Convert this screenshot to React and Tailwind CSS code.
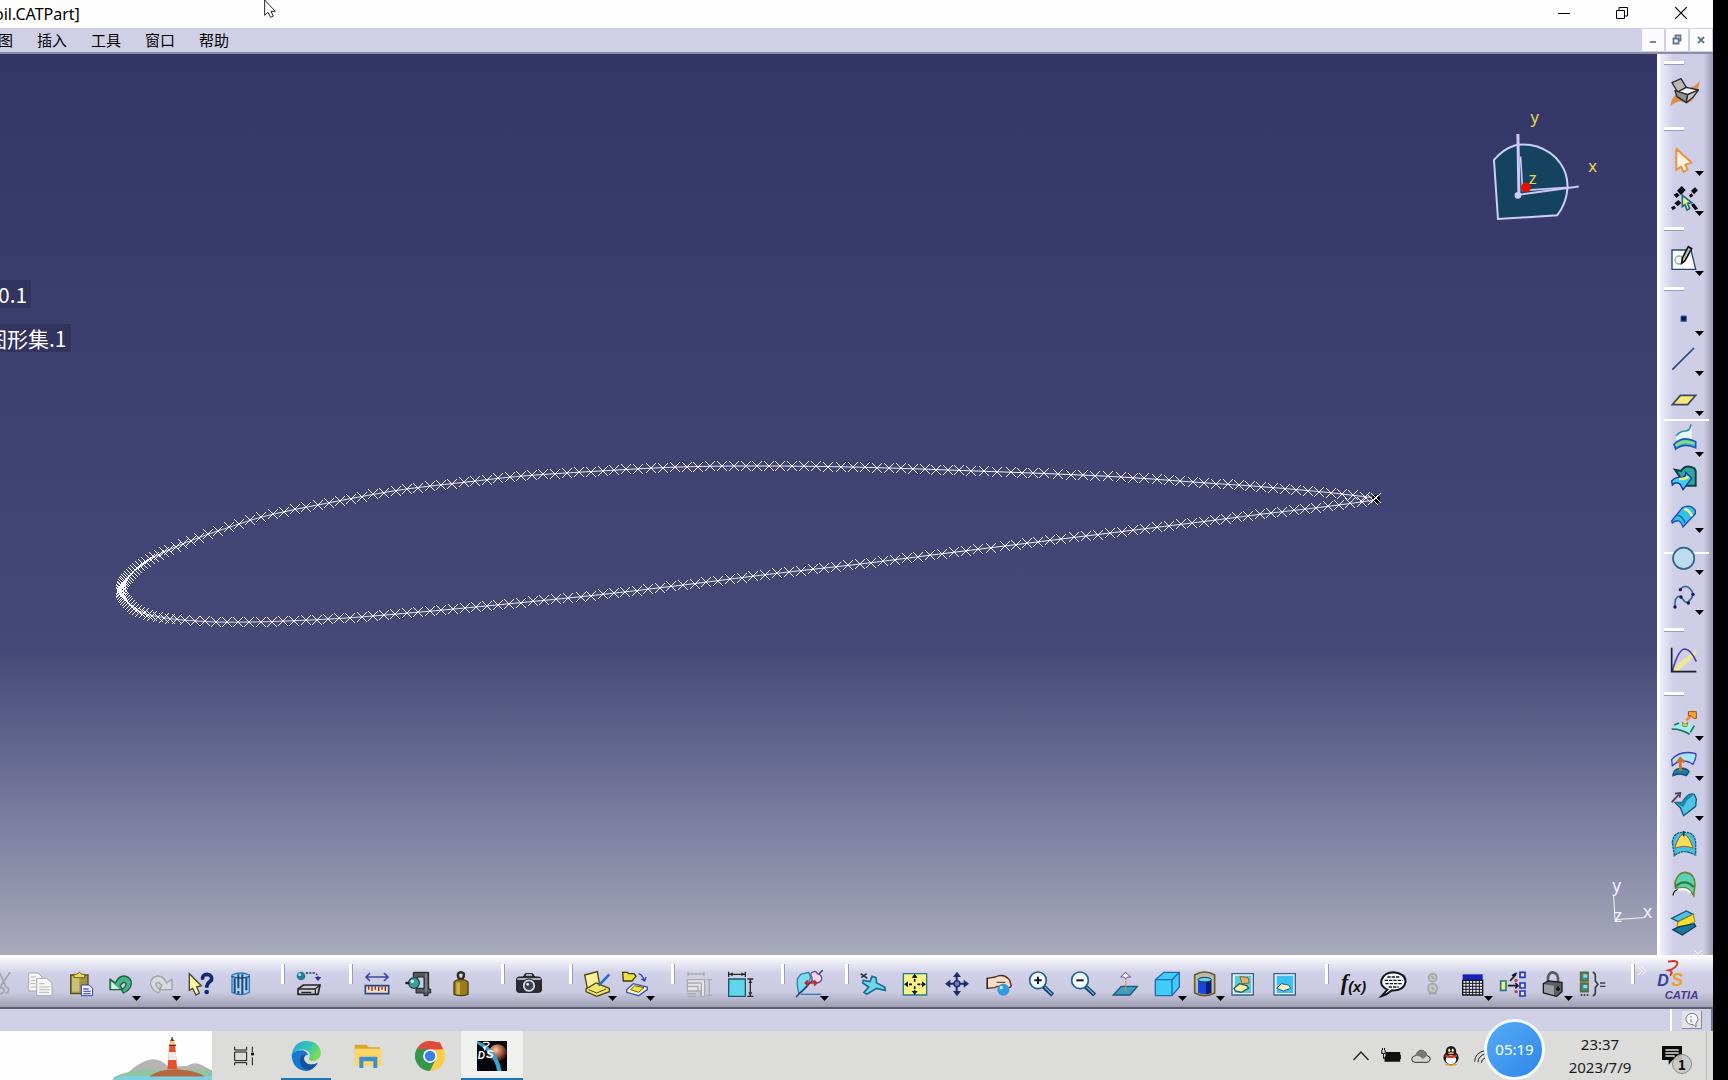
import { useState } from 'react';
import clsx from 'clsx';

const NAVY = '#1d2b6b';
const CYAN = '#4cc3e8';
const TEAL = '#1f7d9c';

// 图标统一画在 78x78 的坐标系里
const icons = {
  workbench: (
    <>
      <path d="M-2 86 Q0 62 14 50 L56 68 Q84 46 86 6 Q76 26 58 28 Q84 60 50 76 Q20 62 -2 86Z" fill="#dd8d4c" />
      <g stroke="#2a2a2a" strokeWidth="4" strokeLinejoin="round">
        <path d="M3 14 L30 2 L46 28 L20 42Z" fill="#b9b9b9" />
        <path d="M20 42 L46 28 L82 36 L50 50Z" fill="#f2f2f2" />
        <path d="M12 38 L50 50 L46 74 L18 56Z" fill="#8f8f8f" />
        <path d="M50 50 L82 36 L66 58 L46 74Z" fill="#c9c9c9" />
      </g>
    </>
  ),
  select: <path d="M16 8 V72 L30 62 L38 78 L50 70 L43 56 L62 50Z" fill="#fff2e4" stroke="#e6923f" strokeWidth="6" strokeLinejoin="round" />,
  trap: (
    <>
      <g fill="#0c0c14">
        <path d="M18 14 L32 0 L44 12 L30 28Z" />
        <path d="M8 26 l10 -6 8 8 -10 8Z M60 14 l12 -10 9 9 -12 12Z M54 28 l8 -6 5 7 -8 6Z" />
        <path d="M10 52 l12 -10 9 9 -11 10Z M0 64 l10 -5 5 7 -10 7Z M60 56 l9 -4 12 16 -9 5Z" />
      </g>
      <path d="M34 28 V62 L42 56 L48 72 L56 68 L50 52 L62 50Z" fill="#f3f08a" stroke="#1e6c80" strokeWidth="5" />
    </>
  ),
  sketch: (
    <>
      <path d="M3 12 H60 L74 70 H3Z" fill="#fbfdff" stroke="#27466d" strokeWidth="4" />
      <circle cx="24" cy="42" r="12" fill="none" stroke="#8ab98a" strokeWidth="4" />
      <path d="M52 2 L34 36 L32 52 L42 44 L62 8Z" fill="#b9c7a9" stroke="#14141c" strokeWidth="5" />
    </>
  ),
  point: <path d="M30 30 H46 V46 H30Z" fill="#0d1446" stroke="#2f6bb4" strokeWidth="3" />,
  line: <path d="M4 71 L69 6" stroke="#23477f" strokeWidth="5" />,
  plane: <path d="M4 56 L28 28 H74 L50 56Z" fill="#f7e679" stroke="#3b4a5f" strokeWidth="5" />,
  extrude: (
    <>
      <path d="M18 24 Q34 16 46 12 Q60 10 60 -4 V42 H18Z" fill="#dff6fb" stroke="#fff" strokeWidth="3" />
      <path d="M16 26 Q28 12 44 12 Q58 10 60 -8" fill="none" stroke="#2b8f9c" strokeWidth="5" />
      <path d="M9 52 Q36 24 74 44 V62 Q38 46 14 66Z" fill="#39bfe4" stroke="#2353b0" strokeWidth="5" />
      <path d="M14 56 Q38 36 70 50" fill="none" stroke="#8be06a" strokeWidth="7" />
    </>
  ),
  multi: (
    <>
      <path d="M12 14 L30 18 Q44 -4 70 10 L74 18 V62 H44Z" fill="#2fa6a0" stroke="#0f3f4c" strokeWidth="6" />
      <path d="M2 48 Q14 34 30 38 Q46 36 44 22 L62 40 L36 74 L28 58 Q14 48 4 60Z" fill="#3ccdf0" stroke="#17329a" strokeWidth="4" />
      <path d="M24 42 Q48 42 52 34" stroke="#e9f06a" strokeWidth="8" fill="none" />
    </>
  ),
  sweep: (
    <>
      <path d="M2 54 L34 14 Q58 2 73 22 V32 L36 72 Q26 42 4 60Z" fill="#35c0ea" stroke="#2149b0" strokeWidth="4" />
      <path d="M40 18 Q58 22 62 40" fill="none" stroke="#eef28a" strokeWidth="8" />
      <path d="M18 36 Q36 40 42 60" fill="none" stroke="#1c6ab2" strokeWidth="4" />
    </>
  ),
  circle: <circle cx="38" cy="40" r="32" fill="#bddcf0" stroke="#2a6585" strokeWidth="5" />,
  spline: (
    <>
      <path d="M28 12 Q44 -4 58 12 Q76 30 50 52 C34 54 38 34 24 34 Q10 36 12 66" fill="none" stroke="#3a6a9c" strokeWidth="5" />
      <g fill="#15155c"><circle cx="28" cy="14" r="5" /><circle cx="66" cy="28" r="5" /><circle cx="52" cy="54" r="5" /><circle cx="30" cy="36" r="5" /><circle cx="12" cy="66" r="5" /></g>
    </>
  ),
  law: (
    <>
      <path d="M2 70 L26 46 L76 8 V20 L20 74Z" fill="#efe79a" />
      <path d="M4 72 Q22 6 42 6 Q60 8 76 44" fill="none" stroke="#4a3aa6" strokeWidth="5" />
      <path d="M2 2 V74 H76" fill="none" stroke="#1d1d2c" strokeWidth="5" />
    </>
  ),
  offsetPoint: (
    <>
      <path d="M2 56 Q20 34 34 38 L74 46 L56 66 Q30 54 2 56Z" fill="#9deef0" />
      <path d="M2 54 Q30 54 56 70 M10 42 L24 36 M70 44 L58 64" stroke="#1d6f52" strokeWidth="5" fill="none" />
      <path d="M34 34 l8 6 8 -6 -2 12 -12 0Z" fill="#e8ee62" stroke="#7b8a2b" strokeWidth="3" />
      <path d="M46 28 L62 12" stroke="#f08a24" strokeWidth="8" fill="none" />
      <path d="M52 2 H76 V22 H68 L60 14 H52Z" fill="#f7a33a" stroke="#9c4f12" strokeWidth="3" />
    </>
  ),
  offset: (
    <>
      <path d="M2 26 Q28 -4 74 8 Q78 18 66 40 Q34 18 4 44Z" fill="#a6e6f6" stroke="#3c3fb4" strokeWidth="4" />
      <path d="M6 70 Q10 52 28 52 Q46 50 54 62 L46 74 Q24 64 6 74Z" fill={TEAL} stroke="#164a72" strokeWidth="4" />
      <path d="M28 60 V24 M18 34 L28 22 L40 34" fill="none" stroke="#d5702c" strokeWidth="8" />
    </>
  ),
  translate: (
    <>
      <path d="M12 34 L34 34 Q50 4 70 10 L76 24 L74 46 L38 74 L28 50Z" fill={CYAN} stroke="#165a74" strokeWidth="4" />
      <path d="M12 34 L34 34 Q50 4 70 10 L50 26 L36 48Z" fill="#1d86a8" />
      <path d="M2 34 L24 10 M12 8 L28 6 L26 20" stroke="#4f3a4c" strokeWidth="5" fill="none" />
    </>
  ),
  fill: (
    <>
      <path d="M4 34 Q8 2 38 4 Q70 2 74 34 V72 Q52 62 40 62 Q24 62 10 74Z" fill="#45bfe2" stroke="#1c5a7a" strokeWidth="4" strokeDasharray="8 2" />
      <path d="M12 52 Q20 16 38 8 Q56 16 66 52 Q40 40 12 52Z" fill="#f8dc5c" stroke="#a35b1c" strokeWidth="3" />
      <path d="M38 0 V16" stroke="#11364c" strokeWidth="5" />
    </>
  ),
  blend: (
    <>
      <path d="M12 34 Q22 2 44 4 Q72 8 72 40 L68 74 Q58 56 44 50 L14 52Z" fill="#59d2b8" stroke="#77812a" strokeWidth="5" />
      <path d="M12 48 Q40 20 68 48" fill="none" stroke="#2c7a3a" strokeWidth="6" />
      <path d="M6 74 Q10 54 24 56 Q46 50 58 66" fill="none" stroke="#f4f7f2" strokeWidth="7" />
      <path d="M6 74 Q8 58 20 56" fill="none" stroke="#1a1a22" strokeWidth="4" />
    </>
  ),
  join: (
    <>
      <path d="M2 22 L46 0 L66 10 L22 32Z" fill={CYAN} stroke="#1f5570" strokeWidth="4" />
      <path d="M22 32 L66 10 L72 32 L22 54 L18 44Z" fill="#f3e02c" stroke="#9c7a20" strokeWidth="3" />
      <path d="M6 56 L22 48 L70 38 L74 46 L34 72Z" fill="#187a9e" stroke="#123c58" strokeWidth="4" />
    </>
  ),
  cut: <path d="M34 4 L54 48 M66 4 L36 48 M38 50 a9 9 0 1 0 2 18 a9 9 0 1 0 -2 -18 M54 48 a9 9 0 1 1 -2 18" fill="none" stroke="#a4a4a8" strokeWidth="5" />,
  copy: (
    <g fill="#f7f7f7" stroke="#a9a9ac" strokeWidth="3">
      <path d="M2 6 H30 L42 18 V60 H2Z" />
      <path d="M26 22 H56 L72 36 V74 H26Z" />
      <path d="M34 38 H50 M34 48 H64 M34 56 H64 M34 64 H64 M8 18 H24 M8 28 H22 M8 38 H22 M8 48 H22" stroke="#b4b4b4" />
    </g>
  ),
  paste: (
    <>
      <path d="M8 12 H60 V68 H8Z" fill="#9d9448" stroke="#55511f" strokeWidth="4" />
      <path d="M12 16 H34 V62 H12Z" fill="#c9c274" />
      <path d="M18 20 V10 H26 L34 4 L42 10 H50 V20Z" fill="#f3d95a" stroke="#6f6420" strokeWidth="3" />
      <path d="M40 42 H64 L74 52 V74 H40Z" fill="#eef0ff" stroke="#3c3f9e" strokeWidth="3" />
      <path d="M46 54 H62 M46 61 H68 M46 68 H68" stroke="#5a5fc4" strokeWidth="4" />
    </>
  ),
  undo: (
    <>
      <path d="M22 36 Q32 14 50 15 Q72 20 70 40 Q66 58 46 66 L40 56 Q56 48 54 38 Q48 28 36 44 L44 56 H6 V24Z" fill="#48b487" stroke="#1e5f4a" strokeWidth="4" strokeLinejoin="round" />
      <path d="M10 32 L34 54 H10Z" fill="#dff4dc" />
    </>
  ),
  redo: <path d="M56 36 Q46 14 28 15 Q6 20 8 40 Q12 58 32 66 L38 56 Q22 48 24 38 Q30 28 42 44 L34 56 H72 V24Z" fill="#d9dae0" stroke="#a2a3aa" strokeWidth="4" strokeLinejoin="round" />,
  whatsThis: (
    <>
      <path d="M4 8 V58 L14 52 L24 72 L34 66 L26 48 L40 44Z" fill="#fbf6a4" stroke="#4a4632" strokeWidth="4" />
      <path d="M44 26 Q42 10 58 10 Q74 12 70 28 Q56 38 56 50" fill="none" stroke="#14286c" strokeWidth="11" />
      <circle cx="56" cy="63" r="7" fill="#14286c" />
    </>
  ),
  bin: (
    <>
      <path d="M12 12 Q38 0 64 12 V64 Q38 78 12 64Z" fill="#a9d6f0" stroke="#2f7ab4" strokeWidth="4" />
      <path d="M10 16 Q38 26 66 16" fill="none" stroke="#1f4f8c" strokeWidth="4" />
      <path d="M20 22 V66 M31 10 V52 M31 60 V70 M43 10 V70 M55 20 V58" stroke="#1f4480" strokeWidth="6" />
    </>
  ),
  material: (
    <>
      <circle cx="15" cy="15" r="13" fill="#237f96" />
      <circle cx="11" cy="11" r="4" fill="#bdf0f5" />
      <path d="M30 6 H54 Q66 8 66 22" fill="none" stroke="#222a6a" strokeWidth="4" strokeDasharray="6 4" />
      <path d="M56 18 H76 L66 30Z" fill="#2a2ab0" />
      <path d="M6 54 L22 42 H72 L66 70 H6Z" fill="#cfcfd4" stroke="#24242c" strokeWidth="5" />
      <path d="M8 54 H58 V70 M58 54 L72 42 M16 64 H46" stroke="#24242c" strokeWidth="4" fill="none" />
    </>
  ),
  measure: (
    <>
      <path d="M6 18 H72 M18 6 L6 18 L18 30 M60 6 L72 18 L60 30" stroke="#3a45a4" strokeWidth="5" fill="none" />
      <path d="M4 44 H74 V68 H4Z" fill="#fbd9c4" stroke="#2b4a84" strokeWidth="5" />
      <path d="M14 46 V56 M24 46 V60 M34 46 V56 M44 46 V60 M54 46 V56 M64 46 V60" stroke="#7a3324" strokeWidth="4" />
    </>
  ),
  caliper: (
    <>
      <path d="M22 4 H68 V54 H74 V66 H66 V74 H54 V66 H30 V52 H54 V18 H34 V24 H22Z" fill="#54585c" stroke="#1e2226" strokeWidth="3" />
      <path d="M60 8 V62" stroke="#8b9094" strokeWidth="4" />
      <circle cx="24" cy="36" r="16" fill="#3aa49a" stroke="#1b4a4c" strokeWidth="4" />
      <circle cx="19" cy="31" r="5" fill="#d6f5ef" />
      <path d="M-2 36 H10" stroke="#222" strokeWidth="7" />
    </>
  ),
  inertia: (
    <>
      <path d="M30 8 Q38 0 48 8 Q48 18 44 24 H34 Q28 18 30 8Z" fill="none" stroke="#2e2a1e" strokeWidth="7" />
      <path d="M18 34 Q22 26 38 26 Q56 26 60 34 V70 Q38 78 18 70Z" fill="#9a7b1c" stroke="#4e3f10" strokeWidth="4" />
      <path d="M25 34 H36 V70 H25Z" fill="#cdb04a" />
    </>
  ),
  camera: (
    <>
      <path d="M2 24 Q2 18 10 18 H22 L28 8 H50 L56 18 H66 Q76 18 76 26 V60 Q74 64 68 64 H8 Q2 64 2 58Z" fill="#2b2e36" stroke="#17181c" strokeWidth="3" />
      <path d="M4 24 H74 M30 12 H48" stroke="#d8dadf" strokeWidth="5" />
      <circle cx="39" cy="44" r="20" fill="#d3d7de" stroke="#17181c" strokeWidth="3" />
      <circle cx="39" cy="44" r="13" fill="#3b4254" />
      <circle cx="35" cy="40" r="4" fill="#eef" />
    </>
  ),
  catalog: (
    <>
      <path d="M2 12 L40 2 L46 36 L10 52Z" fill="#f7ef9a" stroke="#4b4418" strokeWidth="4" />
      <path d="M6 54 L36 36 L76 52 V62 L38 76 L6 62Z" fill="#f1e56a" stroke="#4b4418" strokeWidth="4" />
      <path d="M14 56 L38 66 L66 54" stroke="#4b4418" strokeWidth="3" fill="none" />
      <path d="M76 10 L44 44" stroke="#2a6fc0" strokeWidth="8" />
    </>
  ),
  openCatalog: (
    <>
      <path d="M2 4 H16 L20 8 H36 L42 16 L30 30 H4Z" fill="#f0e23a" stroke="#3b3a16" strokeWidth="4" />
      <path d="M50 8 Q62 12 66 28 M58 24 L68 30 L72 18" stroke="#3a3ac0" strokeWidth="4" fill="none" />
      <path d="M14 56 L34 38 L76 48 V56 L50 74 L14 64Z" fill="#f8f6c0" stroke="#3c50b8" strokeWidth="4" />
      <path d="M26 56 L38 44 L66 50 L50 64Z" fill="#f0e23a" stroke="#5d5a20" strokeWidth="3" />
    </>
  ),
  annotate: (
    <g stroke="#ababaf" strokeWidth="4" fill="none">
      <path d="M6 2 V16 M54 2 V16 M8 9 H52" />
      <path d="M4 26 H56 V76 H44 V60 H4Z" fill="#e5e5e8" />
      <path d="M4 36 H46 V74 M4 46 H36 V60 M4 68 H30 M4 76 H30 M62 26 H78 M62 74 H78 M70 28 V72" />
    </g>
  ),
  dimension: (
    <>
      <path d="M2 24 H52 V76 H2Z" fill="#5fd6ea" stroke="#1c5870" strokeWidth="4" />
      <path d="M2 2 V18 M52 2 V18 M4 10 H50 M58 24 H76 M58 76 H76 M67 26 V74" stroke="#2c2a26" strokeWidth="4" />
      <path d="M4 10 l10 -6 v12Z M50 10 l-10 -6 v12Z M67 26 l-6 10 h12Z M67 74 l-6 -10 h12Z" fill="#2c2a26" />
    </>
  ),
  analysis: (
    <>
      <path d="M8 66 Q2 46 4 24 L14 10 L38 4 L44 18 L34 46 L18 62Z" fill="#7fdaf0" stroke="#2a82b0" strokeWidth="4" />
      <path d="M14 70 H76" stroke="#2a82b0" strokeWidth="4" />
      <path d="M0 78 L80 -2" stroke="#203a80" strokeWidth="4" />
      <path d="M46 6 Q60 -4 64 8 Q82 14 76 28 Q70 38 56 34 Q46 30 48 20 Q42 12 46 6Z" fill="#f3d6e4" stroke="#6a4a96" strokeWidth="4" />
      <path d="M28 36 H62 M36 28 L28 36 L36 44 M54 28 L62 36 L54 44" stroke="#c02626" strokeWidth="5" fill="none" />
    </>
  ),
  fly: (
    <>
      <path d="M10 28 L30 32 L36 16 L48 20 L50 36 L74 48 L76 58 L66 56 L50 52 L20 70 L12 64 L26 48 L8 36Z" fill="#6fd8e6" stroke="#1d6c94" strokeWidth="5" />
      <path d="M2 8 L22 22 M4 20 L20 8" stroke="#26313c" strokeWidth="5" />
    </>
  ),
  fitAll: (
    <>
      <path d="M4 8 H74 V72 H4Z" fill="#f6f486" stroke="#2b7a8c" strokeWidth="4" />
      <path d="M38 32 V14 M38 46 V64 M30 40 H12 M46 40 H64" stroke="#16161c" strokeWidth="5" strokeDasharray="9 3" />
      <path d="M38 8 l-9 12 h18Z M38 72 l-9 -12 h18Z M6 40 l12 -9 v18Z M72 40 l-12 -9 v18Z" fill="#16161c" />
    </>
  ),
  pan: (
    <>
      <path d="M38 12 V68 M12 38 H66" stroke={NAVY} strokeWidth="6" />
      <path d="M39 2 l-12 16 h24Z M39 76 l-12 -16 h24Z M3 38 l16 -12 v24Z M75 38 l-16 -12 v24Z" fill={NAVY} />
      <circle cx="39" cy="38" r="9" fill="#6f7bb0" stroke={NAVY} strokeWidth="4" />
    </>
  ),
  rotate: (
    <>
      <path d="M4 22 L28 18 Q52 6 70 26 L76 44 Q70 56 56 46 H34 L26 50 L4 52Z" fill="#fbdcc6" stroke="#4b2c24" strokeWidth="4" />
      <path d="M4 20 V54" stroke="#222" strokeWidth="4" />
      <path d="M32 34 H58" stroke="#4b2c24" strokeWidth="3" />
      <circle cx="52" cy="56" r="18" fill="#2f9be0" />
      <circle cx="46" cy="50" r="5" fill="#d2f0ff" />
    </>
  ),
  zoomIn: (
    <>
      <path d="M46 46 L74 72" stroke="#163c70" strokeWidth="13" />
      <path d="M50 48 L72 70" stroke="#63bbdc" strokeWidth="4" />
      <circle cx="30" cy="28" r="25" fill="#f0fcff" stroke="#26618c" strokeWidth="5" />
      <path d="M30 17 V39 M19 28 H41" stroke="#16161c" strokeWidth="6" />
    </>
  ),
  zoomOut: (
    <>
      <path d="M46 46 L74 72" stroke="#163c70" strokeWidth="13" />
      <path d="M50 48 L72 70" stroke="#63bbdc" strokeWidth="4" />
      <circle cx="30" cy="28" r="25" fill="#f0fcff" stroke="#26618c" strokeWidth="5" />
      <path d="M19 28 H41" stroke="#16161c" strokeWidth="6" />
    </>
  ),
  normal: (
    <>
      <path d="M4 72 L28 46 H76 L54 72Z" fill="#3b9fc0" stroke="#1d5572" strokeWidth="4" />
      <path d="M41 60 V18" stroke="#e58a3c" strokeWidth="4" strokeDasharray="6 2" />
      <path d="M26 18 L41 4 L56 18 H48 Q41 26 34 18Z" fill="#f4f2ff" stroke="#6a4f9c" strokeWidth="3" />
    </>
  ),
  iso: (
    <>
      <path d="M4 26 L30 4 H76 V48 L54 74 H4Z" fill="#3fcdf6" stroke="#2166b4" strokeWidth="4" />
      <path d="M4 26 H54 V74 M54 26 L76 4" stroke="#2166b4" strokeWidth="4" fill="none" />
    </>
  ),
  shading: (
    <>
      <path d="M8 12 V66 Q38 82 68 66 V12 Q38 -6 8 12Z" fill="#b9bcae" stroke="#6d5a26" strokeWidth="5" />
      <path d="M18 28 V66 Q38 74 58 66 V28Z" fill="#1c46d8" />
      <path d="M42 28 H58 V66 L42 70Z" fill="#0c1f78" />
      <ellipse cx="38" cy="26" rx="20" ry="7" fill="#5fd5e6" stroke="#1b2d50" strokeWidth="3" />
    </>
  ),
  hideShow: (
    <>
      <path d="M6 8 H70 V72 H6Z" fill="#e9fbff" stroke="#3c5e8c" strokeWidth="4" />
      <path d="M14 14 H64 V66 H14Z" fill="#5cc9de" />
      <path d="M30 16 L54 20 L58 36 L36 38Z" fill="#d9b46a" stroke="#8a6a2a" strokeWidth="3" />
      <path d="M12 52 L28 38 L50 44 L56 52 L34 64 L16 60Z" fill="#f2eeb4" stroke="#2c5b44" strokeWidth="4" />
    </>
  ),
  swap: (
    <>
      <path d="M6 8 H70 V72 H6Z" fill="#e9fbff" stroke="#3c5e8c" strokeWidth="4" />
      <path d="M14 14 H64 V66 H14Z" fill="#3fc0f0" />
      <path d="M14 52 L28 38 L50 42 L56 52 L34 60Z" fill="#f2f2c4" stroke="#2c5b84" strokeWidth="3" />
    </>
  ),
  formula: (
    <text x="2" y="56" fontSize="68" fontStyle="italic" fontWeight="bold" fontFamily="'Liberation Serif', serif" fill="#111">
      f<tspan fontSize="44" dy="6" fontFamily="'Liberation Sans', sans-serif">(x)</tspan>
    </text>
  ),
  comment: (
    <>
      <path d="M4 76 L22 56 Q0 46 4 28 Q12 4 42 4 Q76 8 77 32 Q72 60 36 58 Q20 72 4 76Z" fill="#f6f7fb" stroke="#14141a" strokeWidth="6" />
      <path d="M22 18 H60 M14 28 H68 M16 38 H66 M26 48 H56" stroke="#14141a" strokeWidth="4" strokeDasharray="10 3" />
    </>
  ),
  light: (
    <g fill="#c8c8ca" stroke="#a4a4a8" strokeWidth="5">
      <circle cx="38" cy="20" r="12" /><circle cx="38" cy="52" r="14" />
      <path d="M26 68 H50 M34 14 l8 10 M34 48 l8 8" />
    </g>
  ),
  table: (
    <>
      <path d="M8 10 H68 V28 H8Z" fill="#1722b4" />
      <path d="M8 28 H68 V72 H8Z" fill="#e7e8f6" stroke="#14141c" strokeWidth="4" />
      <path d="M18 28 V72 M28 28 V72 M38 28 V72 M48 28 V72 M58 28 V72 M8 37 H68 M8 46 H68 M8 55 H68 M8 64 H68" stroke="#14141c" strokeWidth="3" />
    </>
  ),
  relations: (
    <>
      <path d="M2 30 H18 V58 H2Z" fill="#f0ee8a" stroke="#2a7a7c" strokeWidth="5" />
      <path d="M24 44 H52 M30 30 L48 10 M36 14 L50 6 M46 36 L54 44 L46 52" stroke="#1a1a22" strokeWidth="5" fill="none" />
      <g fill="#c8325c"><circle cx="48" cy="28" r="5" /><circle cx="48" cy="62" r="5" /></g>
      <path d="M60 4 H75 V19 H60Z M60 36 H75 V51 H60Z M60 60 H75 V75 H60Z" fill="#dfe4ff" stroke="#2a35b4" strokeWidth="5" />
    </>
  ),
  lock: (
    <>
      <path d="M24 36 V18 Q28 4 38 4 Q52 6 54 20 V36" fill="none" stroke="#5a5c62" strokeWidth="8" />
      <path d="M10 38 L26 30 L66 34 V62 L50 76 L10 66Z" fill="#5c5f66" stroke="#1c1d22" strokeWidth="4" />
      <path d="M12 40 L42 44 V72 L12 64Z" fill="#9a9da3" />
      <path d="M54 46 V60 M48 54 H60" stroke="#111" strokeWidth="5" />
    </>
  ),
  equivalent: (
    <>
      <path d="M2 4 H24 V30 H2Z M2 36 H24 V62 H2Z" fill="#2f8f9a" stroke="#6a6426" strokeWidth="5" />
      <path d="M10 10 H22 V20 H10Z M10 42 H22 V52 H10Z" fill="#7fe0e6" />
      <path d="M2 72 h5 m4 0 h5 m4 0 h5" stroke="#222" strokeWidth="4" />
      <path d="M38 4 Q46 4 46 16 V30 L54 40 L46 50 V64 Q46 74 38 74" fill="none" stroke="#3c3e46" strokeWidth="5" />
      <path d="M60 36 H76 M60 46 H76" stroke="#3c3e46" strokeWidth="4" />
    </>
  ),
};

const rightGroups = [
  [{ icon: 'workbench', label: '工作台' }],
  [{ icon: 'select', label: '选择', menu: true }, { icon: 'trap', label: '选择陷阱', menu: true }],
  [{ icon: 'sketch', label: '草图', menu: true }],
  [{ icon: 'point', label: '点', menu: true }, { icon: 'line', label: '直线', menu: true }, { icon: 'plane', label: '平面', menu: true }],
  [{ icon: 'extrude', label: '拉伸', menu: true }, { icon: 'multi', label: '多截面曲面' }, { icon: 'sweep', label: '扫掠', menu: true }],
  [{ icon: 'circle', label: '圆', menu: true }, { icon: 'spline', label: '样条线', menu: true }],
  [{ icon: 'law', label: '法则曲线' }],
  [
    { icon: 'offsetPoint', label: '外插延伸', menu: true },
    { icon: 'offset', label: '偏移', menu: true },
    { icon: 'translate', label: '平移', menu: true },
    { icon: 'fill', label: '填充' },
    { icon: 'blend', label: '桥接' },
    { icon: 'join', label: '接合' },
  ],
];

const bottomGroups = [
  [{ icon: 'material', label: '应用材料' }],
  [{ icon: 'measure', label: '测量间距' }, { icon: 'caliper', label: '测量项' }, { icon: 'inertia', label: '测量惯量' }],
  [{ icon: 'camera', label: '捕获' }],
  [{ icon: 'catalog', label: '目录', menu: true }, { icon: 'openCatalog', label: '打开目录', menu: true }],
  [{ icon: 'annotate', label: '标注' }, { icon: 'dimension', label: '尺寸' }],
  [{ icon: 'analysis', label: '分析', menu: true }],
  [
    { icon: 'fly', label: '飞行模式' },
    { icon: 'fitAll', label: '全部适应' },
    { icon: 'pan', label: '平移视图' },
    { icon: 'rotate', label: '旋转' },
    { icon: 'zoomIn', label: '放大' },
    { icon: 'zoomOut', label: '缩小' },
    { icon: 'normal', label: '法线视图' },
    { icon: 'iso', label: '等轴测视图', menu: true },
    { icon: 'shading', label: '着色', menu: true },
    { icon: 'hideShow', label: '隐藏/显示' },
    { icon: 'swap', label: '交换可视空间' },
  ],
];

const standardTools = [
  { icon: 'cut', label: '剪切' },
  { icon: 'copy', label: '复制' },
  { icon: 'paste', label: '粘贴' },
  { icon: 'undo', label: '撤销', menu: true },
  { icon: 'redo', label: '重做', menu: true },
  { icon: 'whatsThis', label: '这是什么' },
  { icon: 'bin', label: '清除' },
];

const knowledgeTools = [
  { icon: 'formula', label: '公式' },
  { icon: 'comment', label: '注释' },
  { icon: 'light', label: '检查' },
  { icon: 'table', label: '设计表', menu: true },
  { icon: 'relations', label: '关系' },
  { icon: 'lock', label: '锁定', menu: true },
  { icon: 'equivalent', label: '等效尺寸' },
];

// 翼型轮廓：从后缘上表面绕前缘回到后缘下表面
const profile = [
  [1376, 498], [1323, 492], [1265, 487], [1207, 483], [1102, 476], [948, 470], [850, 467], [760, 466], [680, 467],
  [600, 471], [523, 476], [467, 482], [400, 490], [333, 502], [270, 515], [230, 527], [190, 541], [150, 559],
  [130, 575], [121, 590], [127, 602], [140, 612], [160, 617], [183, 620], [217, 622], [252, 622], [287, 621],
  [330, 619], [373, 616], [443, 610], [517, 603], [597, 595], [683, 585], [771, 574], [860, 564], [948, 553],
  [1102, 534], [1200, 522], [1263, 514], [1323, 507], [1376, 500],
];

const catmull = (a, b, c, d, t) =>
  0.5 * (2 * b + (c - a) * t + (2 * a - 5 * b + 4 * c - d) * t * t + (3 * b - a - 3 * c + d) * t * t * t);

const curve = profile.slice(0, -1).flatMap((p, i) => {
  const prev = profile[Math.max(i - 1, 0)];
  const next = profile[i + 1];
  const after = profile[Math.min(i + 2, profile.length - 1)];
  return Array.from({ length: 60 }, (_, k) => [
    catmull(prev[0], p[0], next[0], after[0], k / 60),
    catmull(prev[1], p[1], next[1], after[1], k / 60),
  ]);
});

// 前缘附近的点更密
const markers = [];
let travelled = 0;
curve.forEach(([x, y], i) => {
  if (i > 0) travelled += Math.hypot(x - curve[i - 1][0], y - curve[i - 1][1]);
  const step = Math.min(11, 1.5 + Math.max(x - 121, 0) * 0.1);
  if (i === 0 || travelled >= step) {
    markers.push([Math.round(x), Math.round(y)]);
    travelled = 0;
  }
});

const Icon = ({ name }) => (
  <svg viewBox="0 0 78 78" className="h-[26px] w-[26px] overflow-visible" aria-hidden="true">
    {icons[name]}
  </svg>
);

const MenuArrow = () => (
  <svg viewBox="0 0 9 5" className="absolute top-full left-full -mt-px -ml-0.5 h-[5px] w-[9px]" aria-hidden="true">
    <path d="M0 0 H9 L4.500 5Z" fill="#000" />
  </svg>
);

const ToolButton = ({ tool, className }) => (
  <button type="button" title={tool.label} aria-label={tool.label} className={clsx('flex shrink-0 items-center', className)}>
    <span className="relative">
      <Icon name={tool.icon} />
      {tool.menu && <MenuArrow />}
    </span>
  </button>
);

const Grip = () => <span className="h-5 w-1 shrink-0 self-start border-r border-[#9c9db4] bg-white" />;

const TitleBar = () => (
  <header className="relative flex h-7 shrink-0 items-center justify-between bg-[#fefefe] pr-0.5 text-black">
    <h1 className="-ml-1.5 font-['Noto_Sans','Open_Sans',sans-serif] text-base leading-6">oil.CATPart]</h1>
    <svg viewBox="0 0 36 54" className="absolute top-0 left-66 h-[18px] w-3" aria-hidden="true">
      <path d="M2 0 V46 L12 37 L20 52 L28 48 L21 34 H34Z" fill="#fff" stroke="#222" strokeWidth="3" />
    </svg>
    <div className="flex pb-0.5">
      <button type="button" aria-label="最小化" className="flex h-6 w-[58px] items-center justify-center">
        <svg viewBox="0 0 12 12" className="h-3 w-3"><path d="M0 6.500 H12" stroke="#000" /></svg>
      </button>
      <button type="button" aria-label="还原" className="flex h-6 w-[58px] items-center justify-center">
        <svg viewBox="0 0 12 12" className="h-3 w-3" fill="none" stroke="#000"><path d="M.5 3.500 H8.500 V11.500 H.5Z M3 3 V.5 H11.500 V9 H9" /></svg>
      </button>
      <button type="button" aria-label="关闭" className="flex h-6 w-[60px] items-center justify-center">
        <svg viewBox="0 0 12 12" className="h-3 w-3"><path d="M0 0 L12 12 M12 0 L0 12" stroke="#000" strokeWidth="1.200" /></svg>
      </button>
    </div>
  </header>
);

const MenuBar = () => (
  <div className="flex h-[26px] shrink-0 items-center justify-between overflow-hidden border-b-2 border-[#8e8fa6] bg-[#cfd0e6]">
    <nav className="-ml-0.5 flex gap-6 text-[15px] text-black">
      {['图', '插入', '工具', '窗口', '帮助'].map(item => (
        <button key={item} type="button">{item}</button>
      ))}
    </nav>
    <div className="flex gap-0.5 pr-px">
      {[
        ['最小化文档', 'M4 9 H10'],
        ['还原文档', 'M3.500 5.500 H8.500 V10.500 H3.500Z M5.500 5 V2.500 H10.500 V7.500 H9'],
        ['关闭文档', 'M4 4 L10 10 M10 4 L4 10'],
      ].map(([label, d]) => (
        <button key={label} type="button" aria-label={label} className="flex h-[22px] w-[22px] items-center justify-center bg-[#fbfbfc]">
          <svg viewBox="0 0 14 14" className="h-3.5 w-3.5" fill="none" stroke="#66758a" strokeWidth="1.800"><path d={d} /></svg>
        </button>
      ))}
    </div>
  </div>
);

const Compass = () => (
  <svg viewBox="140 330 350 340" className="absolute top-14 right-[53px] h-[113px] w-[117px] font-['Noto_Sans',sans-serif]">
    <path d="M160 480 Q188 448 222 437 Q250 430 290 440 C350 460 384 510 381 566 Q378 610 350 647 L172 658Z" fill="#15425f" stroke="#cdd0f4" strokeWidth="6" />
    <g stroke="#cdc8f4" fill="none">
      <path d="M232 402 L235 585" strokeWidth="9" />
      <path d="M240 470 L246 572 L385 563" strokeWidth="5" />
      <path d="M235 585 L415 560" strokeWidth="6" />
    </g>
    <circle cx="232" cy="587" r="10" fill="#cdd0f4" />
    <circle cx="256" cy="563" r="15" fill="#e01208" />
    <g fill="#e6d84e" fontSize="50">
      <text x="270" y="368">y</text>
      <text x="444" y="517">x</text>
      <text x="265" y="554">z</text>
    </g>
  </svg>
);

const Triad = () => (
  <svg viewBox="80 590 150 150" className="absolute right-0 bottom-7 h-[50px] w-[50px] font-['Noto_Sans',sans-serif]">
    <path d="M100 646 L104 718 L190 712" fill="none" stroke="#f4f4fa" strokeWidth="3" />
    <g fill="#f4f4fa" fontSize="52">
      <text x="96" y="636">y</text>
      <text x="188" y="713">x</text>
      <text x="100" y="726">z</text>
    </g>
  </svg>
);

const Viewport = () => (
  <main className="relative min-w-0 flex-1 overflow-hidden bg-linear-to-b from-[#333566] via-[#464877] via-[66%] to-[#a9aabd] text-[21px] text-white">
    <svg viewBox="0 54 1657 901" className="absolute inset-0 h-full w-full" role="img" aria-label="翼型点集">
      <polyline points={curve.map(p => p.join(',')).join(' ')} fill="none" stroke="#f4f5ff" />
      <circle cx="1376" cy="499" r="4" fill="#000" />
      <g stroke="#f4f5ff">
        {markers.map(([x, y], i) => (
          <path key={i} d={`M${x - 5} ${y - 5} l10 10 m0 -10 l-10 10`} />
        ))}
      </g>
    </svg>
    {/* 结构树 */}
    <ul className="absolute top-[226px] left-0 space-y-4 leading-7">
      <li><span className="-ml-0.5 block w-fit bg-[#32345f] pr-1">0.1</span></li>
      <li><span className="block w-fit bg-[#32345f] pr-1"><span className="-ml-3.5 block">图形集.1</span></span></li>
    </ul>
    <Compass />
    <Triad />
  </main>
);

const RightToolbar = () => (
  <aside className="flex w-14 shrink-0 flex-col border-l-3 border-white bg-[linear-gradient(to_right,#eeeefa,#cfd0e8_25%,#cdcee6_82%,#9b9cb2)]">
    {rightGroups.map((group, g) => (
      <div
        key={g}
        className={clsx('relative', g === 1 && 'mt-2', g === 5 && 'mt-[3px]', g === 6 && 'mt-0.5', g === 7 && 'mt-1')}
      >
        {g === 4 || g === 5 ? (
          <div className={clsx('h-0.5 bg-white', g === 4 ? 'mx-1' : 'absolute top-3.5 right-1 left-1')} />
        ) : (
          <div className={clsx('flex items-center pl-1', g === 0 ? 'h-[17px]' : 'h-5')}>
            <span className="h-1 w-5 border-b border-[#9c9db4] bg-white" />
          </div>
        )}
        {group.map(tool => (
          <ToolButton key={tool.icon} tool={tool} className={clsx('relative pl-[11px]', g === 4 ? 'h-[38px]' : 'h-10')} />
        ))}
      </div>
    ))}
    <svg viewBox="0 0 10 10" className="mt-auto mr-2.5 -mb-1 h-2.5 w-2.5 self-end" fill="none" stroke="#fff">
      <path d="M1 1 L5 5 L9 1 M1 5 L5 9 L9 5" />
    </svg>
  </aside>
);

const BottomToolbar = () => (
  <div className="flex h-[54px] shrink-0 items-center overflow-hidden border-b-2 border-[#5c5d72] bg-[linear-gradient(to_bottom,#fff,#d0d1e8_35%,#cacbe1_72%,#9fa0b4)] pt-1.5">
    <div className="-ml-[19px] mr-5 flex shrink-0">
      {standardTools.map(tool => <ToolButton key={tool.icon} tool={tool} className="h-10 w-10 pl-[7px]" />)}
    </div>
    {bottomGroups.map((group, g) => (
      <div key={g} className="mr-[19px] flex shrink-0">
        <Grip />
        <div className="ml-[3px] flex">
          {group.map(tool => (
            <ToolButton key={tool.icon} tool={tool} className={clsx('h-10 pl-2', tool.menu ? 'w-[38px]' : 'w-[42px]')} />
          ))}
        </div>
      </div>
    ))}
    <div className="flex shrink-0">
      <Grip />
      <div className="ml-1 flex">
        {knowledgeTools.map(tool => <ToolButton key={tool.icon} tool={tool} className="h-10 w-10 pl-[7px]" />)}
      </div>
    </div>
    <div className="mr-2 ml-auto flex h-10 shrink-0">
      <Grip />
      <svg viewBox="0 0 10 10" className="mt-0.5 ml-0.5 h-2.5 w-2.5" fill="none" stroke="#fff">
        <path d="M1 1 L5 5 L1 9 M5 1 L9 5 L5 9" />
      </svg>
    </div>
    <svg viewBox="0 0 160 120" className="mr-1 mb-1.5 h-10 w-[54px] shrink-0 overflow-visible font-['Liberation_Sans',sans-serif]">
      <path d="M38 2 Q68 -4 66 8 Q62 22 40 28 Q56 32 44 44" fill="none" stroke="#d2382e" strokeWidth="6" />
      <g fontStyle="italic" fontWeight="bold">
        <text x="6" y="76" fontSize="48" fill="#35409c">D</text>
        <text x="48" y="74" fontSize="54" fill="#eda02f">S</text>
        <text x="28" y="115" fontSize="34" fill="#4a3a92">CATIA</text>
      </g>
    </svg>
  </div>
);

const StatusBar = () => (
  <footer className="flex h-[22px] shrink-0 justify-end bg-[#cfd0e6]">
    <div className="flex w-[43px] items-center justify-center border-r-2 border-l-2 border-r-[#77788c] border-l-white">
      <button type="button" aria-label="信息" className="flex h-[18px] w-5 items-center justify-center border-r border-b border-[#85868f] bg-[#e4e4e6]">
        <svg viewBox="0 0 16 16" className="h-4 w-4" fill="#f4f4f4" stroke="#7c7c80">
          <path d="M8 1.500 a6 5.500 0 1 0 2 11 L13 15 V11 A6 5.500 0 0 0 8 1.500Z M8 4 V5.500 M8 7 V10.500" />
        </svg>
      </button>
    </div>
  </footer>
);

const Lighthouse = () => (
  <svg viewBox="335 285 301 135" className="h-[45px] w-[100px] shrink-0 self-end" aria-hidden="true">
    <path d="M385 396 Q420 364 455 358 Q480 356 505 380 L560 378 Q585 362 606 376 L636 392 V410 H385Z" fill="#b4b4b2" />
    <path d="M340 412 Q400 384 470 390 L636 390 V420 H340Z" fill="#8fc4a0" />
    <path d="M335 420 Q350 406 400 408 H636 V420Z" fill="#7fd0de" />
    <path d="M446 410 Q480 386 530 388 Q590 392 614 410Z" fill="#b4683c" />
    <path d="M508 312 H525 L531 387 H502Z" fill="#e4512c" />
    <path d="M506 336 H527 L529 360 H504Z" fill="#eeeae8" />
    <path d="M509 300 H524 V316 H509Z" fill="#f4c884" />
    <path d="M516 291 V302 M506 316 H528" stroke="#5a3226" strokeWidth="4" />
    <path d="M509 302 L516 295 L524 302Z" fill="#5a3226" />
  </svg>
);

const EdgeIcon = () => (
  <svg viewBox="0 0 90 90" className="h-[30px] w-[30px]">
    <defs>
      <linearGradient id="edge-top" x1="0" y1="0" x2="1" y2="0.400">
        <stop offset="0" stopColor="#2aa4dc" />
        <stop offset="0.600" stopColor="#34c5b8" />
        <stop offset="1" stopColor="#7bdc56" />
      </linearGradient>
    </defs>
    <path d="M2 42 Q8 2 46 0 Q88 2 90 38 Q86 60 62 60 Q50 58 56 48 Q60 30 40 26 Q16 24 2 42Z" fill="url(#edge-top)" />
    <path d="M2 42 Q10 26 36 28 Q52 34 50 42 Q34 42 36 60 Q46 80 80 66 Q64 92 42 90 Q4 84 2 42Z" fill="#1879cc" />
    <path d="M32 42 Q20 60 34 78 Q42 88 56 86 Q70 82 80 66 Q56 76 44 64 Q34 54 44 42Z" fill="#12539c" />
  </svg>
);

const FolderIcon = () => (
  <svg viewBox="0 0 84 72" className="h-6 w-7">
    <path d="M2 2 H38 L44 10 H78 V30 H2Z" fill="#dba42c" />
    <path d="M2 14 H82 V66 H2Z" fill="#fbd769" />
    <path d="M16 72 V38 H70 V72 H58 V52 H28 V72Z" fill="#3f8ed0" />
  </svg>
);

const ChromeIcon = () => (
  <svg viewBox="0 0 48 48" className="h-[30px] w-[30px]">
    <path d="M24 24 L3.200 12 A24 24 0 0 1 44.800 12Z" fill="#de4a3c" />
    <path d="M24 24 L44.800 12 A24 24 0 0 1 24 48Z" fill="#f9cd46" />
    <path d="M24 24 L24 48 A24 24 0 0 1 3.200 12Z" fill="#34974c" />
    <path d="M24 13 H44.800 L33.500 29.500Z" fill="#f9cd46" />
    <path d="M14.500 29.500 L3.200 12 L24 13Z" fill="#34974c" />
    <path d="M14.500 29.500 L24 48 L33.500 29.500Z" fill="#34974c" />
    <path d="M33.500 29.500 L24 48 L38 43 L42 28Z" fill="#f9cd46" />
    <path d="M24 13 L3.200 12 Q10 4 20 2 H40 L44.800 13Z" fill="#de4a3c" />
    <circle cx="24" cy="24" r="11" fill="#fff" />
    <circle cx="24" cy="24" r="8.500" fill="#3b7ded" />
  </svg>
);

const CatiaIcon = () => (
  <svg viewBox="0 0 90 90" className="h-[30px] w-[30px]">
    <defs>
      <radialGradient id="catia-planet" cx="0.400" cy="0.300" r="0.700">
        <stop offset="0" stopColor="#f3c9a8" />
        <stop offset="0.500" stopColor="#a85a3c" />
        <stop offset="1" stopColor="#000" />
      </radialGradient>
    </defs>
    <path d="M0 0 H90 V90 H0Z" fill="#05070c" />
    <circle cx="62" cy="38" r="28" fill="url(#catia-planet)" />
    <path d="M0 0 Q60 20 74 90 H60 Q54 40 0 8Z" fill="#3f9fd0" />
    <path d="M18 5 Q38 2 36 9 Q32 16 18 20 Q28 21 22 28" fill="none" stroke="#fff" strokeWidth="4" />
    <g fill="#fff" fontStyle="italic" fontWeight="bold" fontFamily="'Liberation Sans', sans-serif">
      <text x="2" y="54" fontSize="30">D</text>
      <text x="27" y="50" fontSize="34">S</text>
    </g>
  </svg>
);

const TaskViewIcon = () => (
  <svg viewBox="0 0 60 60" className="h-5 w-5" fill="none" stroke="#111" strokeWidth="3">
    <path d="M2 2 V12 H38 V2 M2 18 H38 V44 H2Z M2 58 V50 H38 V58 M55 2 V18 M55 34 V58" />
    <path d="M51 20 H60 V28 H51Z" fill="#111" stroke="none" />
  </svg>
);

const apps = [
  { name: '任务视图', icon: <TaskViewIcon /> },
  { name: 'Microsoft Edge', icon: <EdgeIcon />, open: true },
  { name: '文件资源管理器', icon: <FolderIcon /> },
  { name: 'Google Chrome', icon: <ChromeIcon /> },
  { name: 'CATIA', icon: <CatiaIcon />, open: true, active: true },
];

const Tray = () => (
  <div className="relative flex h-full items-center">
    <button type="button" aria-label="显示隐藏的图标" className="flex w-[30px] justify-center">
      <svg viewBox="0 0 16 10" className="h-2.5 w-4" fill="none" stroke="#222" strokeWidth="1.300"><path d="M.5 9 L8 1 L15.500 9" /></svg>
    </button>
    <button type="button" aria-label="电池" className="flex w-[30px] justify-center">
      <svg viewBox="0 0 58 44" className="h-[15px] w-5">
        <path d="M14 14 H54 V38 H12 V26" fill="#111" stroke="#111" strokeWidth="4" />
        <path d="M2 6 V16 H12 V6 M7 16 V30 H14 M4 0 V6 M10 0 V6" stroke="#111" strokeWidth="3" fill="none" />
        <path d="M56 20 V32" stroke="#111" strokeWidth="4" />
      </svg>
    </button>
    <button type="button" aria-label="OneDrive" className="flex w-[30px] justify-center">
      <svg viewBox="0 0 60 42" className="h-3.5 w-5">
        <path d="M12 40 Q2 40 2 30 Q4 20 14 20 Q20 2 34 4 Q46 6 48 20 Q58 22 58 30 Q56 40 48 40Z" fill="#d4d4d4" stroke="#333" strokeWidth="3" />
        <path d="M12 21 Q20 3 34 4 Q46 6 48 20 L36 30 Q24 18 12 21Z" fill="#77787a" />
      </svg>
    </button>
    <button type="button" aria-label="QQ" className="flex w-[30px] justify-center">
      <svg viewBox="0 0 50 58" className="h-5 w-[18px]">
        <ellipse cx="25" cy="54" rx="18" ry="4" fill="#e8a22c" />
        <ellipse cx="25" cy="34" rx="22" ry="20" fill="#181818" />
        <ellipse cx="25" cy="16" rx="15" ry="16" fill="#181818" />
        <ellipse cx="25" cy="40" rx="15" ry="13" fill="#fff" />
        <path d="M8 24 Q25 34 42 24 V31 Q25 38 8 31Z" fill="#d92e24" />
        <ellipse cx="20" cy="12" rx="3" ry="5" fill="#fff" /><ellipse cx="30" cy="12" rx="3" ry="5" fill="#fff" />
        <ellipse cx="25" cy="21" rx="9" ry="3" fill="#efa62c" />
      </svg>
    </button>
    <button type="button" aria-label="网络" className="flex w-[99px] pl-2">
      <svg viewBox="0 0 36 42" className="h-3.5 w-3" fill="none" stroke="#222" strokeWidth="3">
        <path d="M2 38 Q2 12 34 4 M12 40 Q12 22 34 14 M22 41 Q22 32 34 26" />
      </svg>
    </button>
    <time className="w-[70px] text-center font-['Noto_Sans',sans-serif] text-[15px] leading-[23px] text-[#1a1a1a]">
      23:37<br />2023/7/9
    </time>
    <button type="button" aria-label="1 条通知" className="relative ml-[27px] h-6 w-11">
      <svg viewBox="0 0 60 60" className="h-5 w-5"><path d="M0 0 H60 V42 H32 L20 56 V42 H0Z" fill="#0a0a0a" /><path d="M10 12 H50 M10 21 H50 M10 30 H38" stroke="#e0e0de" strokeWidth="4" /></svg>
      <span className="absolute top-2.5 left-2.5 flex h-5 w-5 items-center justify-center rounded-full border border-[#8a8a8a] bg-[#c9c9c7]/90 text-sm font-bold text-[#111]">1</span>
    </button>
    <span className="mr-1.5 h-full w-px bg-[#bdbdbb]" />
    {/* 录屏计时悬浮球 */}
    <div className="absolute -top-3 left-[138px] flex h-[61px] w-[61px] items-center justify-center rounded-full border-3 border-[#f3f8fd] bg-linear-to-br from-[#55acf8] to-[#2f86e8] font-['Noto_Sans',sans-serif] text-[15px] text-white">
      05:19
    </div>
  </div>
);

const Taskbar = () => {
  const [query, setQuery] = useState('');

  return (
    <div className="flex h-[49px] shrink-0 items-center bg-[#dcdcda]">
      <label className="flex h-full w-[212px] items-center bg-[#fefefe]">
        <input value={query} onChange={e => setQuery(e.target.value)} aria-label="搜索" className="h-full min-w-0 flex-1 px-3 text-sm outline-none" />
        <Lighthouse />
      </label>
      <div className="ml-px flex h-full flex-1">
        {apps.map(app => (
          <button
            key={app.name}
            type="button"
            title={app.name}
            aria-label={app.name}
            className={clsx('relative flex h-full w-[62px] items-center justify-center', app.active && 'bg-[#f0f0ee]')}
          >
            {app.icon}
            {app.open && (
              <span className={clsx('absolute bottom-0 h-0.5 bg-[#1f74b4]', app.active ? 'inset-x-0' : 'inset-x-1.5')} />
            )}
          </button>
        ))}
      </div>
      <Tray />
    </div>
  );
};

const App = () => (
  <div className="min-h-screen bg-black pr-[15px] font-['Noto_Sans_CJK_SC',sans-serif]">
    <div className="flex min-h-screen flex-col">
      <TitleBar />
      <MenuBar />
      <div className="flex flex-1">
        <Viewport />
        <RightToolbar />
      </div>
      <BottomToolbar />
      <StatusBar />
      <Taskbar />
    </div>
  </div>
);

export default App;
